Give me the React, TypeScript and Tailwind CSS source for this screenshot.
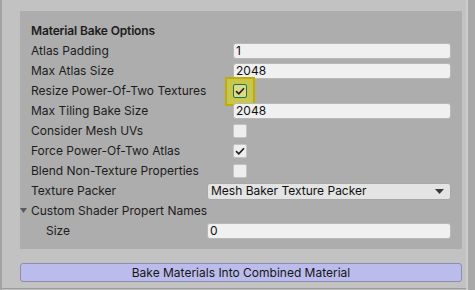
import type { ReactNode } from 'react'

function Row({ label, children, labelWidth = 'w-[202px]', indent = false }: { label: ReactNode; children?: ReactNode; labelWidth?: string; indent?: boolean }) {
  return (
    <div className="flex h-5 items-center">
      <div className={`${labelWidth} shrink-0 truncate ${indent ? 'pl-[15px]' : ''}`}>{label}</div>
      <div className="flex flex-1 items-center">{children}</div>
    </div>
  )
}

function Field({ value }: { value: string }) {
  return (
    <div className="flex h-4 flex-1 items-center rounded-[3px] border border-[#b8b8b8] bg-[#f0f0f0] pl-[2px] text-[12px] text-[#101010]">
      {value}
    </div>
  )
}

function Check() {
  return (
    <svg width="10" height="8" viewBox="0 0 10 8" className="text-[#1e1e1e]">
      <path d="M1 4.2 L3.8 6.8 L9 1.2" fill="none" stroke="currentColor" strokeWidth="1.6" />
    </svg>
  )
}

function Checkbox({ checked = false }: { checked?: boolean }) {
  return (
    <div className="flex h-[14px] w-[14px] items-center justify-center rounded-[2px] border border-[#c4c4c4] bg-[#eeeeee]">
      {checked && <Check />}
    </div>
  )
}

export default function App() {
  return (
    <div
      className="flex h-[290px] w-[475px] overflow-hidden bg-[#c2c2c2] text-[12px] text-[#1c1c1c]"
      style={{ fontFamily: 'Inter, "Noto Sans", sans-serif' }}
    >
      <div className="w-[2px] shrink-0 bg-[#a3a3a3]" />
      <div className="flex w-[464px] shrink-0 flex-col">
        <div className="pl-[18px] pr-[4px] pt-[11px]">
          <div className="bg-[#adadad] pb-[8px] pl-[11px] pr-[11px] pt-[10px]">
            <div className="flex h-5 items-center font-semibold tracking-[-0.15px]">Material Bake Options</div>
            <Row label="Atlas Padding">
              <Field value="1" />
            </Row>
            <Row label="Max Atlas Size">
              <Field value="2048" />
            </Row>
            <Row label="Resize Power-Of-Two Textures">
              <div className="-ml-2 flex h-[29px] w-[30px] items-center justify-center border-2 border-[#bfae00] bg-[#c9c64c]">
                <div className="flex h-[14px] w-[14px] items-center justify-center rounded-[2px] border border-[#1d6f58] bg-[#dcdc88]">
                  <Check />
                </div>
              </div>
            </Row>
            <Row label="Max Tiling Bake Size">
              <Field value="2048" />
            </Row>
            <Row label="Consider Mesh UVs">
              <Checkbox />
            </Row>
            <Row label="Force Power-Of-Two Atlas">
              <Checkbox checked />
            </Row>
            <Row label="Blend Non-Texture Properties">
              <Checkbox />
            </Row>
            <Row label="Texture Packer" labelWidth="w-[176px]">
              <div className="flex h-[17px] flex-1 items-center justify-between rounded-[3px] border border-[#a8a8a8] bg-[#e4e4e4] pl-[3px] pr-[6px] text-[#101010]">
                <span>Mesh Baker Texture Packer</span>
                <svg width="9" height="5" viewBox="0 0 9 5">
                  <path d="M0 0 H9 L4.5 5 Z" fill="#3a3a3a" />
                </svg>
              </div>
            </Row>
            <div className="-ml-[11px] flex h-5 items-center">
              <svg width="11" height="8" viewBox="0 0 11 8" className="shrink-0">
                <path d="M0 1 H7 L3.5 6 Z" fill="#5a5a5a" />
              </svg>
              <span>Custom Shader Propert Names</span>
            </div>
            <Row label="Size" labelWidth="w-[176px]" indent>
              <Field value="0" />
            </Row>
          </div>
          <div className="mt-[14px] flex h-[19px] items-center justify-center rounded-[3px] border border-[#8c8cae] bg-[#bcbcec] text-[#151515]">
            Bake Materials Into Combined Material
          </div>
        </div>
        <div className="mt-auto mb-[1px] h-px bg-[#9a9a9a]" />
      </div>
      <div className="w-[2px] shrink-0 bg-[#cdcdcd]" />
      <div className="flex-1 bg-[#a9a9a9]" />
    </div>
  )
}
